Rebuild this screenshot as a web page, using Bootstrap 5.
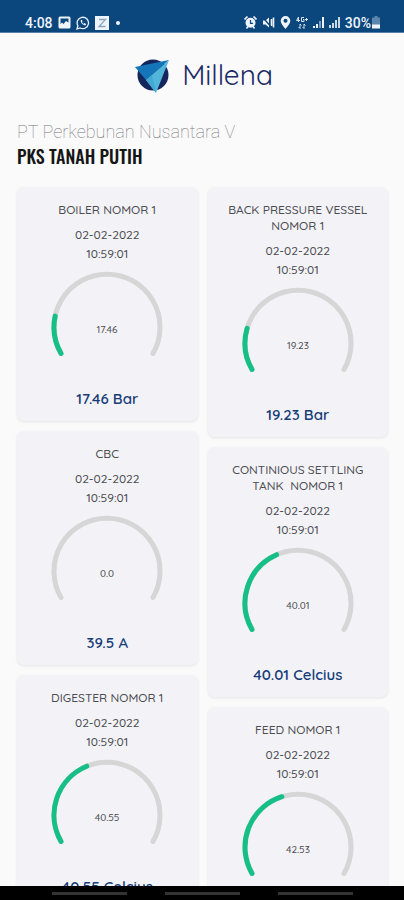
<!DOCTYPE html>
<html lang="id">
<head>
<meta charset="utf-8">
<meta name="viewport" content="width=device-width, initial-scale=1">
<title>Millena</title>
<link href="https://cdn.jsdelivr.net/npm/bootstrap@5.3.0/dist/css/bootstrap.min.css" rel="stylesheet">
<style>
  body { background: #fafafb; font-family: Quicksand, Inter, sans-serif; color: #4c4c52; }
  .status-bar { background: #0b467d; color: #eef4fb; height: 33px; padding: 13px 23px 0 25px; border-bottom: 1px solid #5d7ea8; font: 500 14px/20px Roboto, sans-serif; }
  .status-bar svg { display: block; }
  .status-group { gap: 5px; }
  .brand { height: 84px; gap: 12px; padding-left: 4px; color: #1c2a66; font-size: 28px; line-height: 36px; font-weight: 400; }
  .content { padding: 0 16px 0 17px; scrollbar-width: none; }
  .company { font: 100 18px/22px Roboto, sans-serif; color: #77777c; margin: 4px 0 0; }
  .plant { font: 500 18px/24px "Bebas Neue", Oswald, "Barlow Condensed", "Roboto Condensed", "Liberation Sans Narrow", "Liberation Sans", sans-serif; font-family: Oswald, "Liberation Sans Narrow", sans-serif; color: #161616; margin: 1px 0 19px; }
  .meters { gap: 10px; }
  .meter { background: #f3f3f7; border-radius: 7px; padding: 15px 12px 10px; box-shadow: 0 1px 3px #00000018; text-align: center; }
  .meter h2 { font-size: 12px; line-height: 16px; font-weight: 500; margin: 0 -4px 7px; white-space: pre-line; }
  .stamp { font-size: 12px; line-height: 19px; font-weight: 500; }
  .gauge { display: block; width: 112px; margin: 8px auto 30px; }
  .gauge path { fill: none; stroke-width: 5; stroke-linecap: round; }
  .track { stroke: #d6d6d7; }
  .fill { stroke: #16bf85; }
  .gauge text { font-size: 10px; font-weight: 500; fill: #4c4c52; text-anchor: middle; }
  .reading { font-size: 15px; line-height: 24px; font-weight: 600; color: #163c78; }
  .nav-keys { background: #000; height: 14px; gap: 38px; }
  .nav-keys span { width: 75px; height: 3px; background: #333; }
</style>
<script src="https://cdn.jsdelivr.net/npm/bootstrap@5.3.0/dist/js/bootstrap.bundle.min.js"></script>
</head>
<body>
<div class="vh-100 d-flex flex-column overflow-hidden">
  <div class="status-bar d-flex justify-content-between flex-shrink-0">
    <div class="status-group d-flex align-items-center">
      <span>4:08</span>
      <svg width="13" height="13" viewBox="0 0 13 13"><rect x=".5" y=".5" width="12" height="12" rx="1.500" fill="#eef4fb"/><path d="M2.500 2.500h8v4L8 5 5.500 8 4 6.500 2.500 8z" fill="#0b467d"/></svg>
      <svg width="14" height="14" viewBox="0 0 14 14" fill="none" stroke="#eef4fb"><path d="M1 13l.9-3.200A5.700 5.700 0 1 1 4.200 12z" stroke-width="1.300"/><path d="M4.700 4.200c-.3 2.500 2.500 5.300 5 5l.3-1.200-1.500-.9-.9.6C6.700 7.300 6.300 6.800 6 6l.6-.8-.7-1.500z" fill="#eef4fb" stroke="none"/></svg>
      <svg width="14" height="14" viewBox="0 0 14 14"><rect width="14" height="14" fill="#eef4fb"/><path d="M4 3.500h6.500L4 10.500h6.500" fill="none" stroke="#8ea2bb" stroke-width="1.300"/></svg>
      <svg width="10" height="14" viewBox="0 0 10 14"><circle cx="4" cy="7" r="2" fill="#eef4fb"/></svg>
    </div>
    <div class="status-group d-flex align-items-center">
      <svg width="13" height="13" viewBox="0 0 13 13"><path d="M.5 3.500l3-3M12.500 3.500l-3-3M2.500 12.500l1.500-2M10.500 12.500L9 10.500" stroke="#eef4fb" stroke-width="1.600"/><circle cx="6.500" cy="6.800" r="5" fill="#eef4fb"/><path d="M6.500 4v3.300H9" fill="none" stroke="#0b467d" stroke-width="1.200"/></svg>
      <svg width="13" height="13" viewBox="0 0 13 13"><path d="M1 4.500h2.500L7 1.500v10L3.500 8.500H1z" fill="#eef4fb"/><path d="M9.500 3v7M11.500 1.500v10" stroke="#eef4fb" stroke-width="1.600"/><path d="M.5 1l9.500 11" stroke="#0b467d" stroke-width="1.300"/></svg>
      <svg width="11" height="13" viewBox="0 0 11 13"><path d="M5.500 0a4.800 4.800 0 0 0-4.800 4.800C.7 8 5.500 13 5.500 13s4.800-5 4.800-8.200A4.800 4.800 0 0 0 5.500 0z" fill="#eef4fb"/><circle cx="5.500" cy="4.800" r="2" fill="#0b467d"/></svg>
      <svg width="12" height="13" viewBox="0 0 12 13" fill="none" stroke="#d6e1ee"><path d="M2.500 6V1L.5 4.500H4M8 1.500H5.500v4H8V3.500H7M9 3.500h3M10.500 2v3M4 8v4.500L2.500 11M8 12.500V8l1.500 1.500M4 8L5.500 9.500M8 12.500L6.500 11"/></svg>
      <svg width="11" height="13" viewBox="0 0 11 13"><path d="M0 10h2v2H0zM3 8h2v4H3z" fill="#eef4fb"/><path d="M6 5h2v7H6z" fill="#7f9dbf"/><path d="M9 1h2v11H9z" fill="#eef4fb"/></svg>
      <svg width="11" height="13" viewBox="0 0 11 13"><path d="M0 9h2v3H0zM3 7h2v5H3zM6 4h2v8H6zM9 1h2v11H9z" fill="#c9d7e7"/></svg>
      <div class="d-flex align-items-center"><span>30%</span>
      <svg width="10" height="13" viewBox="0 0 10 13"><path d="M3.500 0h3v1.500H9V9H1V1.500h2.500z" fill="#5d86ad"/><path d="M1 8.500h8v4H1z" fill="#eef4fb"/></svg></div>
    </div>
  </div>

  <header class="brand d-flex align-items-center justify-content-center flex-shrink-0">
    <svg width="35" height="35" viewBox="0 0 35 35" aria-hidden="true">
      <circle cx="18" cy="17" r="15.500" fill="#14265c"/>
      <path d="M0 9L34 2 11 22z" fill="#1575b9"/>
      <path d="M11 22L34 2 21 35z" fill="#52b5da"/>
      <path d="M11 22l6-5 4 18z" fill="#44a8d2"/>
    </svg>
    <span>Millena</span>
  </header>

  <main class="content flex-grow-1 overflow-auto">
    <p class="company">PT Perkebunan Nusantara V</p>
    <h1 class="plant">PKS TANAH PUTIH</h1>
    <div class="meters d-flex align-items-start">
      <div class="meters d-flex flex-column col">
        <article class="meter">
          <h2>BOILER NOMOR 1</h2>
          <div class="stamp">02-02-2022<br>10:59:01</div>
          <svg class="gauge" viewBox="0 0 112 86"><path class="track" d="M10 82.500A53 53 0 1 1 102 82.500"/><path class="fill" pathLength="100" stroke-dasharray="17.460 200" d="M10 82.500A53 53 0 1 1 102 82.500"/><text x="56" y="62">17.46</text></svg>
          <div class="reading">17.46 Bar</div>
        </article>
        <article class="meter">
          <h2>CBC</h2>
          <div class="stamp">02-02-2022<br>10:59:01</div>
          <svg class="gauge" viewBox="0 0 112 86"><path class="track" d="M10 82.500A53 53 0 1 1 102 82.500"/><text x="56" y="62">0.0</text></svg>
          <div class="reading">39.5 A</div>
        </article>
        <article class="meter">
          <h2>DIGESTER NOMOR 1</h2>
          <div class="stamp">02-02-2022<br>10:59:01</div>
          <svg class="gauge" viewBox="0 0 112 86"><path class="track" d="M10 82.500A53 53 0 1 1 102 82.500"/><path class="fill" pathLength="100" stroke-dasharray="40.550 200" d="M10 82.500A53 53 0 1 1 102 82.500"/><text x="56" y="62">40.55</text></svg>
          <div class="reading">40.55 Celcius</div>
        </article>
      </div>
      <div class="meters d-flex flex-column col">
        <article class="meter">
          <h2>BACK PRESSURE VESSEL
NOMOR 1</h2>
          <div class="stamp">02-02-2022<br>10:59:01</div>
          <svg class="gauge" viewBox="0 0 112 86"><path class="track" d="M10 82.500A53 53 0 1 1 102 82.500"/><path class="fill" pathLength="100" stroke-dasharray="19.230 200" d="M10 82.500A53 53 0 1 1 102 82.500"/><text x="56" y="62">19.23</text></svg>
          <div class="reading">19.23 Bar</div>
        </article>
        <article class="meter">
          <h2>CONTINIOUS SETTLING
TANK&nbsp; NOMOR 1</h2>
          <div class="stamp">02-02-2022<br>10:59:01</div>
          <svg class="gauge" viewBox="0 0 112 86"><path class="track" d="M10 82.500A53 53 0 1 1 102 82.500"/><path class="fill" pathLength="100" stroke-dasharray="40.010 200" d="M10 82.500A53 53 0 1 1 102 82.500"/><text x="56" y="62">40.01</text></svg>
          <div class="reading">40.01 Celcius</div>
        </article>
        <article class="meter">
          <h2>FEED NOMOR 1</h2>
          <div class="stamp">02-02-2022<br>10:59:01</div>
          <svg class="gauge" viewBox="0 0 112 86"><path class="track" d="M10 82.500A53 53 0 1 1 102 82.500"/><path class="fill" pathLength="100" stroke-dasharray="42.530 200" d="M10 82.500A53 53 0 1 1 102 82.500"/><text x="56" y="62">42.53</text></svg>
          <div class="reading">42.53 Celcius</div>
        </article>
      </div>
    </div>
  </main>
  <div class="nav-keys d-flex align-items-center justify-content-center flex-shrink-0"><span></span><span></span><span></span></div>
</div>
</body>
</html>
